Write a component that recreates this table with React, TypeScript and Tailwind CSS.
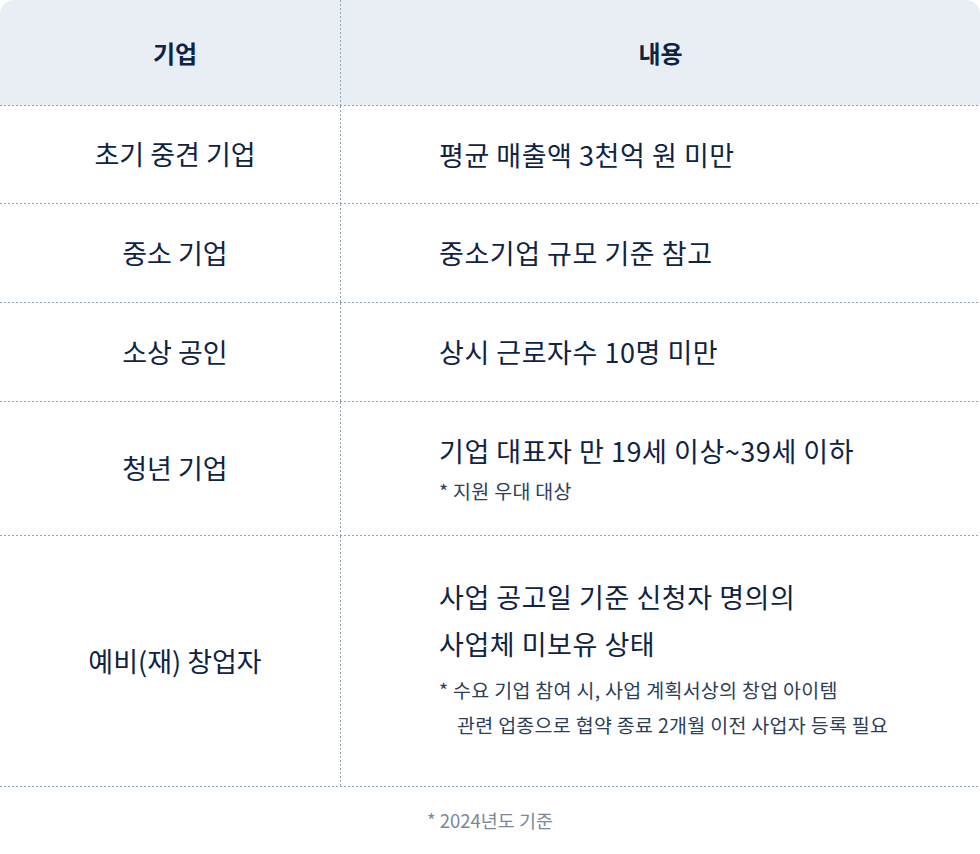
import React from 'react'

const font = { fontFamily: '"Noto Sans CJK KR", "Noto Sans", sans-serif' }

type Row = {
  name: string
  height: string
  main: string[]
  mainLeading?: string
  notes?: string[]
  notesClass?: string
  cellClass?: string
}

const rows: Row[] = [
  { name: '초기 중견 기업', height: 'h-[97px]', main: ['평균 매출액 3천억 원 미만'] },
  { name: '중소 기업', height: 'h-[98px]', main: ['중소기업 규모 기준 참고'] },
  { name: '소상 공인', height: 'h-[98px]', main: ['상시 근로자수 10명 미만'] },
  {
    name: '청년 기업',
    height: 'h-[133px]',
    main: ['기업 대표자 만 19세 이상~39세 이하'],
    mainLeading: 'leading-[40px]',
    notes: ['* 지원 우대 대상'],
    notesClass: 'mt-[2.5px]',
    cellClass: 'pt-[2px]',
  },
  {
    name: '예비(재) 창업자',
    height: 'h-[250px]',
    main: ['사업 공고일 기준 신청자 명의의', '사업체 미보유 상태'],
    mainLeading: 'leading-[47px]',
    notes: ['* 수요 기업 참여 시, 사업 계획서상의 창업 아이템', '관련 업종으로 협약 종료 2개월 이전 사업자 등록 필요'],
    notesClass: 'mt-[5px]',
    cellClass: 'pb-[7px]',
  },
]

// dotted rule, drawn as a repeating gradient so the dots match the reference
function HLine() {
  return <div className="h-px w-full bg-[linear-gradient(90deg,#8fa4b2_2px,transparent_2px)] bg-[length:4px_1px]" />
}

function VLine() {
  return <div className="w-px self-stretch bg-[linear-gradient(180deg,#8fa4b2_2px,transparent_2px)] bg-[length:1px_4px]" />
}

export default function App() {
  return (
    <div className="w-[980px] h-[854px] bg-white text-[#0f2342]" style={font}>
      <div className="flex flex-col">
        {/* header */}
        <div className="flex h-[105px] bg-[#e9eef5] rounded-t-[14px]">
          <div className="w-[340px] pl-[10px] flex items-center justify-center text-[24px] font-bold">
            기업
          </div>
          <VLine />
          <div className="flex-1 flex items-center justify-center text-[24px] font-bold">
            내용
          </div>
        </div>
        <HLine />

        {rows.map((row) => (
          <React.Fragment key={row.name}>
            <div className={`flex ${row.height}`}>
              <div className="w-[340px] pl-[10px] flex items-center justify-center text-[27px]">
                {row.name}
              </div>
              <VLine />
              <div className={`flex-1 pl-[98px] flex flex-col justify-center ${row.cellClass ?? ''}`}>
                <div className={`text-[27px] tracking-[0.02em] ${row.mainLeading ?? 'leading-[36px]'}`}>
                  {row.main.map((line) => (
                    <div key={line}>{line}</div>
                  ))}
                </div>
                {row.notes && (
                  <div className={`text-[19.5px] leading-[35px] tracking-[0.015em] text-[#2d3e58] ${row.notesClass ?? ''}`}>
                    {row.notes.map((line, i) => (
                      <div key={line} className={i > 0 ? 'pl-[18px]' : ''}>
                        {line}
                      </div>
                    ))}
                  </div>
                )}
              </div>
            </div>
            <HLine />
          </React.Fragment>
        ))}

        <div className="mt-[21px] text-center text-[18.5px] leading-[24px] text-[#7c889a]">
          * 2024년도 기준
        </div>
      </div>
    </div>
  )
}
